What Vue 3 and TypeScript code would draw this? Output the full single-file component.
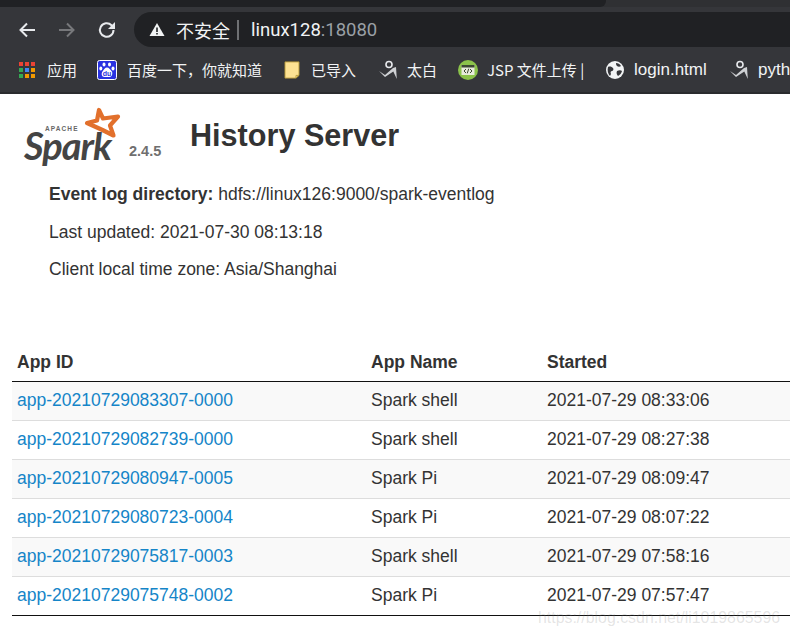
<script setup lang="ts">
interface Row { id: string; name: string; started: string }
const rows: Row[] = [
  { id: 'app-20210729083307-0000', name: 'Spark shell', started: '2021-07-29 08:33:06' },
  { id: 'app-20210729082739-0000', name: 'Spark shell', started: '2021-07-29 08:27:38' },
  { id: 'app-20210729080947-0005', name: 'Spark Pi', started: '2021-07-29 08:09:47' },
  { id: 'app-20210729080723-0004', name: 'Spark Pi', started: '2021-07-29 08:07:22' },
  { id: 'app-20210729075817-0003', name: 'Spark shell', started: '2021-07-29 07:58:16' },
  { id: 'app-20210729075748-0002', name: 'Spark Pi', started: '2021-07-29 07:57:47' },
]
const apps = ['#ea4335', '#ea4335', '#ea4335', '#34a853', '#4285f4', '#f29900', '#34a853', '#f29900', '#f29900']
</script>

<template>
  <div class="page">
    <div class="tabstrip"><div class="tab"></div></div>
    <div class="toolbar">
      <div class="navs">
        <svg width="20" height="20" viewBox="0 0 20 20"><path d="M18 10H3.500M10 3.500 3.500 10l6.500 6.500" fill="none" stroke="#e8eaed" stroke-width="2"/></svg>
        <svg width="20" height="20" viewBox="0 0 20 20"><path d="M2 10h14.500M10 3.500l6.500 6.500-6.500 6.500" fill="none" stroke="#77787b" stroke-width="2"/></svg>
        <svg width="20" height="20" viewBox="0 0 20 20"><path d="M16.500 10a6.800 6.800 0 1 1-2-4.800L17 7.600" fill="none" stroke="#e8eaed" stroke-width="2"/><path d="M18 2v7h-7z" fill="#e8eaed"/></svg>
      </div>
      <div class="omnibox">
        <svg width="16" height="15" viewBox="0 0 16 15"><path d="M8 1l7.500 13H.5z" fill="#f1f3f4"/><path d="M7.200 5.500h1.600v4.500H7.200zM7.200 11h1.600v1.600H7.200z" fill="#202124"/></svg>
        <span class="insecure">不安全</span>
        <span class="sep"></span>
        <span class="host">linux128<span class="port">:18080</span></span>
      </div>
    </div>
    <div class="bookmarks">
      <span class="bm bm-apps">
        <span class="grid"><i v-for="(c, i) in apps" :key="i" :style="{ background: c }"></i></span>
        <span>应用</span>
      </span>
      <span class="bm bm-baidu">
        <svg width="20" height="20" viewBox="0 0 20 20"><rect x=".5" y=".5" width="19" height="19" rx="2" fill="#2932e1" stroke="#fff"/><g fill="#fff"><ellipse cx="7" cy="4.500" rx="1.500" ry="2"/><ellipse cx="12.500" cy="4.500" rx="1.500" ry="2"/><ellipse cx="3.800" cy="8.500" rx="1.500" ry="1.900"/><ellipse cx="16" cy="8.500" rx="1.500" ry="1.900"/><path d="M10 7.500c2 0 3 2 4.500 3.500s1 6-2 6h-5c-3 0-3.500-3.500-2-5.500S8 7.500 10 7.500z"/></g><text x="10" y="15.500" text-anchor="middle" font-size="7" font-weight="700" fill="#2932e1" font-family="Liberation Sans, sans-serif">du</text></svg>
        <span>百度一下，你就知道</span>
      </span>
      <span class="bm bm-folder">
        <svg width="16" height="18" viewBox="0 0 16 20" preserveAspectRatio="none"><path d="M1 1h14v15l-3 3H1z" fill="#fde293" stroke="#b89b3c"/><path d="M12 19v-3h3" fill="none" stroke="#b89b3c"/></svg>
        <span>已导入</span>
      </span>
      <span class="bm bm-tb">
        <svg width="20" height="20" viewBox="0 0 20 20"><circle cx="11" cy="4.500" r="3" fill="none" stroke="#e8eaed" stroke-width="1.600"/><path d="M1 11l6 4 8-7 3-1 .8 12-3.500-7.500L7 17z" fill="#cfd1d4"/></svg>
        <span>太白</span>
      </span>
      <span class="bm bm-jsp">
        <svg width="20" height="20" viewBox="0 0 20 20"><circle cx="10" cy="10" r="10" fill="#8bc34a"/><rect x="3.500" y="5" width="13" height="10" fill="#e8ecdc"/><rect x="3.500" y="5" width="13" height="2.500" fill="#3d4a33"/><path d="M8 9l-2 2 2 2M12 9l2 2-2 2M10.700 8.700l-1.400 4.600" fill="none" stroke="#3d4a33"/></svg>
        <span>JSP 文件上传 |</span>
      </span>
      <span class="bm bm-login">
        <svg width="18" height="18" viewBox="0 0 18 18"><circle cx="9" cy="9" r="9" fill="#f1f3f4"/><path d="M2 6c2-1 4 0 5 1s0 3-1 3-2 1-1 3l-1 2C2 13 1 9 2 6zM10 2c2 0 4 1 5 3-1 1-3 1-4 0s-1-2-1-3zM11 10c2-1 4-1 5 0-.5 2-2 4-4 5-1-1-2-3-1-5z" fill="#35363a"/></svg>
        <span>login.html</span>
      </span>
      <span class="bm bm-py">
        <svg width="20" height="20" viewBox="0 0 20 20"><circle cx="11" cy="4.500" r="3" fill="none" stroke="#e8eaed" stroke-width="1.600"/><path d="M1 11l6 4 8-7 3-1 .8 12-3.500-7.500L7 17z" fill="#cfd1d4"/></svg>
        <span>pyth</span>
      </span>
    </div>

    <main class="content">
      <header class="head">
        <div class="logo">
          <svg class="star" width="40" height="34" viewBox="0 0 40 34"><path d="M17 3l4 8.500 15-2-8 9 3.500 10-11-5.500L5 16l10-2.500z" fill="none" stroke="#e2702c" stroke-width="4.200" stroke-linejoin="round"/></svg>
          <span class="apache">APACHE</span>
          <span class="spark">Spark</span>
          <span class="version">2.4.5</span>
        </div>
        <h1>History Server</h1>
      </header>
      <ul class="info">
        <li><strong>Event log directory:</strong> hdfs://linux126:9000/spark-eventlog</li>
        <li>Last updated: 2021-07-30 08:13:18</li>
        <li>Client local time zone: Asia/Shanghai</li>
      </ul>
      <table>
        <thead>
          <tr><th class="c1">App ID</th><th class="c2">App Name</th><th>Started</th></tr>
        </thead>
        <tbody>
          <tr v-for="r in rows" :key="r.id">
            <td><a href="#">{{ r.id }}</a></td>
            <td>{{ r.name }}</td>
            <td>{{ r.started }}</td>
          </tr>
        </tbody>
      </table>
    </main>
    <div class="watermark">https://blog.csdn.net/li1019865596</div>
  </div>
</template>

<style>
html, body { margin: 0; background: #fff; overflow: hidden; }
</style>

<style scoped>
.page { position: relative; width: 790px; height: 634px; overflow: hidden; font-family: "Liberation Sans", Arial, sans-serif; color: #333; background: #fff; }
.tabstrip { height: 7px; background: #2f3033; }
.tab { width: 606px; height: 7px; background: #202124; border-bottom-right-radius: 6px; }
.toolbar { height: 40px; box-sizing: border-box; padding: 5px 0 0 17px; display: flex; align-items: flex-start; gap: 17px; background: #35363a; }
.navs { display: flex; gap: 20px; margin-top: 8px; }
.omnibox { flex: 1; height: 35px; padding-left: 15px; display: flex; align-items: center; background: #202124; border-radius: 18px 0 0 18px; font-family: "Noto Sans CJK SC", "Liberation Sans", sans-serif; }
.insecure { margin-left: 11px; font-size: 18px; color: #f1f3f4; }
.sep { width: 2px; height: 20px; margin: 0 12px 0 7px; background: #6f7174; }
.host { font-family: "Roboto", "Liberation Sans", sans-serif; font-size: 18.500px; color: #f1f3f4; }
.port { color: #9aa0a6; }
.bookmarks { height: 47px; box-sizing: border-box; display: flex; align-items: center; background: #35363a; border-bottom: 2px solid #2a2b2e; color: #f1f3f4; font-family: "Noto Sans CJK SC", "Liberation Sans", sans-serif; font-size: 15px; white-space: nowrap; }
.bm { display: inline-flex; align-items: center; flex: none; }
.bm-apps { margin-left: 19px; gap: 12px; width: 78px; }
.bm-baidu { gap: 10px; width: 187px; }
.bm-folder { gap: 11px; width: 96px; }
.bm-tb { gap: 9px; width: 78px; }
.bm-tb svg, .bm-py svg { margin-left: -2px; }
.bm-jsp { gap: 9px; width: 148px; }
.bm-login { gap: 10px; width: 125px; font-family: "Liberation Sans", sans-serif; font-size: 17px; }
.bm-py { gap: 9px; font-family: "Liberation Sans", sans-serif; font-size: 17px; }
.grid { display: grid; grid-template-columns: repeat(3, 4px); grid-auto-rows: 4px; gap: 2px; width: 16px; }
.grid i { display: block; }
.content { padding: 0 0 0 12px; }
.head { display: flex; align-items: flex-start; height: 74px; }
.logo { position: relative; width: 178px; height: 74px; flex: none; }
.star { position: absolute; left: 70px; top: 13px; }
.apache { position: absolute; left: 33px; top: 32px; font-size: 6.500px; line-height: 6px; font-weight: 700; letter-spacing: 1.100px; color: #666; }
.spark { position: absolute; left: 12px; top: 38px; font-family: "Lato", sans-serif; font-size: 38px; line-height: 26px; font-style: italic; font-weight: 700; letter-spacing: -1px; color: #444; }
.version { position: absolute; left: 117px; top: 49px; font-size: 14.500px; font-weight: 700; color: #6f6f6f; }
h1 { margin: 0; padding-top: 23px; font-size: 30.600px; line-height: 36px; font-weight: 700; color: #333; }
.info { list-style: none; margin: 8px 0 0; padding: 0 0 0 37px; font-size: 17.500px; line-height: 37.500px; }
table { width: 778px; margin-top: 55px; border-collapse: collapse; font-size: 17.500px; line-height: 22px; }
th { height: 38px; padding: 0 5px 1px; box-sizing: border-box; text-align: left; vertical-align: middle; color: #333; font-weight: 700; border-bottom: 1px solid #111; }
td { height: 39px; padding: 0 5px 2px; box-sizing: border-box; border-bottom: 1px solid #ddd; vertical-align: middle; }
.c1 { width: 354px; }
.c2 { width: 176px; }
tbody tr:nth-child(odd) td { background: #f9f9f9; }
tbody tr:last-child td { border-bottom-color: #111; }
a { color: #1585c8; text-decoration: none; }
.watermark { position: absolute; left: 538px; top: 609px; font-size: 15.900px; color: rgba(120, 120, 120, .2); white-space: nowrap; }
</style>
